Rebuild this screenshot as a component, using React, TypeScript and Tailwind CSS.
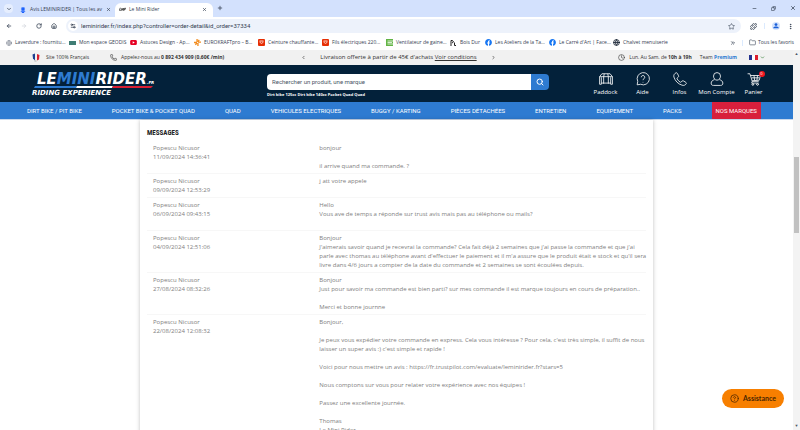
import type { ReactNode } from 'react'
import {
  ArrowLeft, ArrowRight, ChevronDown, ChevronLeft, ChevronRight, ChevronsRight, Clock,
  Copy, EllipsisVertical, Flower2, Folder, Globe, House, Minus, Phone, Plus,
  Puzzle, RotateCw, Search, Settings2, Star, X, CircleQuestionMark,
} from 'lucide-react'
import { FaFacebook } from 'react-icons/fa'

const bookmarks: { label: string; width: string; icon: ReactNode }[] = [
  { label: 'Laverdure : fournitu...', width: 'w-[63px]', icon: <Globe className="size-1.5 text-gray-500" /> },
  { label: 'Mon espace GEODIS', width: 'w-[61px]', icon: <span className="h-1 w-[7px] bg-[#3f7d74]" /> },
  {
    label: 'Astuces Design - Ap...', width: 'w-[64px]',
    icon: (
      <svg viewBox="0 0 16 12" className="h-[5px] w-[7px]">
        <rect width="16" height="12" rx="3" fill="#e60023" />
        <path d="M6 3l5 3-5 3z" fill="#fff" />
      </svg>
    ),
  },
  {
    label: 'EUROKRAFTpro – B...', width: 'w-[64px]',
    icon: (
      <svg viewBox="0 0 16 16" className="size-[7px]" stroke="#f28c1e" strokeWidth="3">
        <path d="M7 0v7M0 8h7M9 9v7M9 7h7M3 13l4-4M9 6l3-4" />
      </svg>
    ),
  },
  { label: 'Ceinture chauffante...', width: 'w-[64px]', icon: <ShopIcon /> },
  { label: 'Fils électriques 220...', width: 'w-[64px]', icon: <ShopIcon /> },
  {
    label: 'Ventilateur de gaine...', width: 'w-[64px]',
    icon: (
      <svg viewBox="0 0 14 14" className="size-[7px]">
        <rect width="14" height="14" fill="#62b445" />
        <path d="M3 4h11M3 7h9M3 10h11" stroke="#fff" strokeWidth="1.5" />
      </svg>
    ),
  },
  {
    label: 'Bois Dur', width: 'w-[35px]',
    icon: (
      <svg viewBox="0 0 14 12" className="h-1.5 w-[7px]" stroke="#222" fill="none" strokeWidth="2">
        <path d="M2 12V1h3l2 3-3 2M9 5v6h3" />
      </svg>
    ),
  },
  { label: 'Les Ateliers de la Ta...', width: 'w-[64px]', icon: <FaFacebook className="size-[7px] text-[#1877f2]" /> },
  { label: "Le Carré d'Art | Face...", width: 'w-[64px]', icon: <FaFacebook className="size-[7px] text-[#1877f2]" /> },
  { label: 'Chalvet menuiserie', width: 'w-[60px]', icon: <Globe className="size-[7px] text-gray-800" strokeWidth={3} /> },
]

const navItems = [
  'DIRT BIKE / PIT BIKE', 'POCKET BIKE & POCKET QUAD', 'QUAD', 'VEHICULES ELECTRIQUES', 'BUGGY / KARTING',
  'PIÈCES DÉTACHÉES', 'ENTRETIEN', 'EQUIPEMENT', 'PACKS',
]

// 24x24 line drawings
const shortcuts = [
  {
    label: 'Paddock',
    paths: ['M5 3h14l4 5v13h-3V9M5 3L1 8v13h3V9', 'M1 8h22', 'M8 8v12M16 8v12', 'M4 19h16', 'M9 3L8 8M15 3l1 5'],
  },
  {
    label: 'Aide',
    paths: ['M2 22l1-6a10.500 10.500 0 1 1 5 5z', 'M9 9a3 3 0 1 1 4.500 2.600c-1 .6-1.500 1.200-1.500 2.400', 'M12 17v1'],
  },
  {
    label: 'Infos',
    paths: ['M5 1.500c1-.6 2 0 2.500 1l2 4c.4 1 .2 1.700-.6 2.400l-1.700 1.400c-.5.500-.4 1 0 1.700 1.500 2.400 3 4 5 5.300.8.500 1.400.4 1.900-.1l1.500-1.700c.7-.7 1.500-.8 2.400-.2l4 2.500c1 .7 1.200 1.500.5 2.500-1.500 2.400-4 3.300-7 2.300C8.500 20.500 3.500 15 1.500 8.500c-.8-3 .8-5.600 3.500-7z'],
  },
  {
    label: 'Mon Compte',
    paths: ['M12 1a6 6 0 0 1 6 6c0 3.500-2.500 7-6 7s-6-3.500-6-7a6 6 0 0 1 6-6z', 'M8 13c-3.500 1-6 3-6 6s1.500 4 4 4h12c2.500 0 4-1 4-4s-2.500-5-6-6'],
  },
  {
    label: 'Panier', count: 0,
    paths: ['M1 3h4l4 13h11', 'M6 6h17l-2 8-12 1M8 10h13M12 6l1 8M18 6l-1 8', 'M9 16l-1 3h12', 'M10 20a1.500 1.500 0 1 0 .1 0zM18 20a1.500 1.500 0 1 0 .1 0z'],
  },
]

const messages = [
  { date: '11/09/2024 14:36:41', text: 'bonjour\n\nil arrive quand ma commande. ?' },
  { date: '09/09/2024 12:53:29', text: 'j att votre appele' },
  { date: '06/09/2024 09:43:15', text: 'Hello\nVous ave de temps a réponde sur trust avis mais pas au téléphone ou mails?\n\u00a0' },
  {
    date: '04/09/2024 12:51:06',
    text: "Bonjour\nJ'aimerais savoir quand je recevrai la commande? Cela fait déjà 2 semaines que j'ai passe la commande et que j'ai\nparle avec thomas au téléphone avant d'effectuer le paiement et il m'a assure que le produit était e stock et qu'il sera\nlivre dans 4/6 jours a compter de la date du commande et 2 semaines se sont écoulées depuis.",
  },
  {
    date: '27/08/2024 08:32:26',
    text: 'Bonjour\nJust pour savoir ma commande est bien parti? sur mes commande il est marque toujours en cours de préparation..\n\nMerci et bonne journne',
  },
  {
    date: '22/08/2024 12:08:32',
    text: "Bonjour,\n\nJe peux vous expédier votre commande en express. Cela vous intéresse ? Pour cela, c'est très simple, il suffit de nous\nlaisser un super avis :) c'est simple et rapide !\n\nVoici pour nous mettre un avis : https://fr.trustpilot.com/evaluate/leminirider.fr?stars=5\n\nNous comptons sur vous pour relater votre expérience avec nos équipes !\n\nPassez une excellente journée.\n\nThomas\nLe Mini Rider",
  },
]

function ShopIcon() {
  return (
    <svg viewBox="0 0 14 14" className="size-[7px]">
      <rect width="14" height="14" rx="2" fill="#e62e04" />
      <path d="M3 4h8M4 5c0 5 6 5 6 0" stroke="#fff" strokeWidth="1.5" fill="none" />
    </svg>
  )
}

function Browser() {
  return (
    <div className="shrink-0 text-gray-700">
      {/* Tabs */}
      <div className="flex h-[17px] items-end bg-[#d3e1fd] pr-1">
        <button aria-label="Rechercher des onglets" className="mb-1 ml-1 mr-1 flex size-[9px] items-center justify-center rounded-sm bg-[#e6eefe]">
          <ChevronDown className="size-1.5" strokeWidth={3} />
        </button>
        <div className="flex h-3.5 w-[98px] items-center gap-1 pb-px pl-[3px] text-[5px]">
          <Flower2 className="size-1.5 shrink-0 text-blue-600" strokeWidth={3} />
          <span className="flex-1 whitespace-nowrap">Avis LEMINIRIDER | Tous les av</span>
          <button aria-label="Fermer Avis" className="mr-1.5"><X className="size-[5px]" strokeWidth={3} /></button>
        </div>
        <div className="flex h-3.5 w-[98px] items-center gap-[3px] rounded-t-md bg-white pb-px pl-1 text-[5px]">
          <svg viewBox="0 0 16 10" className="h-[5px] w-[7px]" stroke="#444" strokeWidth="2" fill="none">
            <path d="M3 1L1 7h3M5 8l2-6 1 4 3-4-2 6M11 8l2-6h2l-1 3h-2" />
          </svg>
          <span className="flex-1">Le Mini Rider</span>
          <button aria-label="Fermer Le Mini Rider" className="mr-1.5"><X className="size-[5px]" strokeWidth={3} /></button>
        </div>
        <button aria-label="Nouvel onglet" className="mb-1.5 ml-1"><Plus className="size-1.5" strokeWidth={3} /></button>
        <div className="mb-1.5 ml-auto flex items-center gap-3.5">
          <button aria-label="Réduire"><Minus className="size-[5px]" strokeWidth={3} /></button>
          <button aria-label="Restaurer"><Copy className="size-[5px] -scale-x-100" strokeWidth={3} /></button>
          <button aria-label="Fermer"><X className="size-1.5" strokeWidth={3} /></button>
        </div>
      </div>

      {/* Toolbar */}
      <div className="flex h-[18px] items-center gap-[9px] bg-white pl-1.5 pr-1.5">
        <button aria-label="Précédent"><ArrowLeft className="size-1.5" strokeWidth={3} /></button>
        <button aria-label="Suivant" className="text-gray-300"><ArrowRight className="size-1.5" strokeWidth={3} /></button>
        <button aria-label="Actualiser"><RotateCw className="size-1.5" strokeWidth={3} /></button>
        <button aria-label="Accueil"><House className="size-1.5" strokeWidth={3} /></button>
        <div className="flex h-3.5 flex-1 items-center gap-[3px] rounded-full bg-[#edf2fb] pl-0.5 pr-1.5">
          <span className="flex size-2.5 items-center justify-center rounded-full bg-white">
            <Settings2 className="size-1.5" strokeWidth={3} />
          </span>
          <input aria-label="Adresse" className="flex-1 bg-transparent font-['Roboto'] text-[6px] leading-[10px] text-gray-700 outline-none"
            defaultValue="leminirider.fr/index.php?controller=order-detail&id_order=37334" />
          <Star className="size-[7px]" strokeWidth={2} />
        </div>
        <div className="flex items-center gap-[7px]">
          <button aria-label="Extensions"><Puzzle className="size-[7px]" strokeWidth={3} /></button>
          <span className="h-1.5 w-px bg-blue-100" />
          <button aria-label="Profil">
            <svg viewBox="0 0 14 14" className="size-2">
              <circle cx="7" cy="7" r="7" fill="#d3e3fd" />
              <circle cx="7" cy="4.5" r="2.5" fill="#1a5fd8" />
              <path d="M2 11c0-4 10-4 10 0z" fill="#1a5fd8" />
            </svg>
          </button>
          <button aria-label="Menu"><EllipsisVertical className="size-[7px]" strokeWidth={3} /></button>
        </div>
      </div>

      {/* Bookmarks */}
      <div className="flex h-[15px] items-center bg-white pl-1.5 pr-1.5 text-[5px]">
        {bookmarks.map(({ label, width, icon }) => (
          <a key={label} href="#" className={`flex shrink-0 items-center gap-[3px] whitespace-nowrap ${width}`}>
            {icon}
            <span>{label}</span>
          </a>
        ))}
        <button aria-label="Autres favoris" className="ml-auto"><ChevronsRight className="size-1.5" strokeWidth={3} /></button>
        <span className="mx-1.5 h-1.5 w-px bg-blue-100" />
        <a href="#" className="flex items-center gap-[2px] whitespace-nowrap"><Folder className="size-[7px]" />Tous les favoris</a>
      </div>
    </div>
  )
}

function TopBar() {
  return (
    <div className="grid h-[15px] grid-cols-[1fr_auto_1fr] items-center whitespace-nowrap bg-[#f1f1f1] pl-8 pr-7 text-[5px] text-[#333]">
      <div className="flex items-center">
        <svg viewBox="0 0 16 18" className="mr-1.5 h-[9px] w-2">
          <path d="M1 3l5-2v14l-4-4z" fill="#1d3f8f" />
          <path d="M10 2l5 2-1 9-4 2z" fill="#d9202e" />
          <path d="M5 16h4" stroke="#777" />
        </svg>
        <span className="w-16">Site 100% Français</span>
        <Phone className="mr-1 size-[7px]" />
        <span>Appelez-nous au <b>0 892 434 909 (0,60€ /min)</b></span>
      </div>
      <div className="flex items-center gap-3.5">
        <button aria-label="Annonce précédente"><ChevronLeft className="size-[5px]" strokeWidth={3} /></button>
        <span className="text-[6px]">Livraison offerte à partir de 45€ d'achats <a href="#" className="underline">Voir conditions</a></span>
        <button aria-label="Annonce suivante"><ChevronRight className="size-[5px]" strokeWidth={3} /></button>
      </div>
      <div className="flex items-center justify-end">
        <Clock className="mr-1 size-[7px]" />
        <span>Lun. Au Sam. de <b>10h à 19h</b></span>
        <a href="#" className="ml-2">Team <b className="text-[#2e7bd1]">Premium</b></a>
        <button aria-label="Langue" className="ml-3 flex items-center gap-0.5">
          <svg viewBox="0 0 9 5" className="h-[5px] w-[9px]">
            <rect width="9" height="5" fill="#fff" />
            <rect width="3" height="5" fill="#24338f" />
            <rect x="6" width="3" height="5" fill="#dc1f2e" />
          </svg>
          <ChevronDown className="size-[5px] text-[#2f7d32]" strokeWidth={3} />
        </button>
      </div>
    </div>
  )
}

function Logo() {
  return (
    <svg viewBox="0 0 126 26" className="h-[26px] w-[126px]" fontFamily="DejaVu Sans" fontWeight="bold" fontStyle="italic">
      <text x="6" y="13" fontSize="15" fill="#fff">LE<tspan fill="#2e7bd1">MINI</tspan>RIDER<tspan fontSize="4">.FR</tspan></text>
      <path d="M4 15h42l-1 2H3z" fill="#2e7bd1" />
      <path d="M46 15h36l-1 2H45z" fill="#fff" />
      <path d="M82 15h40l-2 2H81z" fill="#d81f32" />
      <text x="1" y="24" fontSize="7" fill="#fff">RIDING EXPERIENCE</text>
    </svg>
  )
}

function Header() {
  return (
    <header>
      <div className="flex h-[37px] items-center bg-[#03213a] pl-[31px] pr-[21px] text-white">
        <a href="#" aria-label="Le Mini Rider"><Logo /></a>
        <div className="ml-[110px] mt-1 w-[282px]">
          <form className="flex h-4">
            <input aria-label="Recherche" placeholder="Rechercher un produit, une marque"
              className="min-w-0 flex-1 rounded-l bg-white px-[5px] font-['Roboto'] text-[6px] text-gray-700 outline-none placeholder:text-gray-600" />
            <button type="button" aria-label="Rechercher" className="flex w-[18px] items-center justify-center rounded-r bg-[#2e7bd1]">
              <Search className="size-2" strokeWidth={3} />
            </button>
          </form>
          <p className="mt-0.5 text-[4px] font-bold leading-[6px]">Dirt bike 125cc Dirt bike 140cc Pocket Quad Quad</p>
        </div>
        <div className="ml-auto flex text-[6px] leading-[8px]">
          {shortcuts.map(({ label, paths, count }) => (
            <a key={label} href="#" className="flex w-[37px] flex-col items-center gap-0.5">
              <span className="relative">
                <svg viewBox="0 0 24 24" className="size-3.5" fill="none" stroke="#fff" strokeWidth="1.4" strokeLinejoin="round">
                  {paths.map((d) => <path key={d} d={d} />)}
                </svg>
                {count !== undefined && (
                  <span className="absolute -right-1 -top-px size-1.5 rounded-full bg-[#f0161f] text-center text-[4px] leading-[6px]">{count}</span>
                )}
              </span>
              <span className="whitespace-nowrap">{label}</span>
            </a>
          ))}
        </div>
      </div>
      <nav className="flex h-[17px] items-center gap-[30px] whitespace-nowrap bg-[#2e7bd1] pl-[27px] font-['Roboto'] text-[6px] text-white">
        {navItems.map((item) => <a key={item} href="#">{item}</a>)}
        <a href="#" className="flex h-full items-center bg-[#d81f3c] px-1">NOS MARQUES</a>
      </nav>
    </header>
  )
}

function Messages() {
  return (
    <section className="mx-auto w-[513px] max-w-full px-[7px] pt-2 shadow-[0_0_4px_rgba(0,0,0,0.25)]">
      <h2 className="mb-[3px] font-['Liberation_Sans_Narrow','Roboto_Condensed','Roboto'] text-[7px] font-bold leading-[10px] text-[#222]">MESSAGES</h2>
      <table className="w-full table-fixed text-left text-[6px] leading-[9px] text-[#808080]">
        <tbody>
          {messages.map(({ date, text }) => (
            <tr key={date} className="border-b border-[#f7f7f7]">
              <td className="w-1/3 px-1.5 pb-0.5 pt-[3px] align-top">Popescu Nicusor<br />{date}</td>
              <td className="whitespace-pre pb-0.5 pl-1.5 pt-[3px] align-top">{text}</td>
            </tr>
          ))}
        </tbody>
      </table>
    </section>
  )
}

export default function App() {
  return (
    <div className="relative flex h-screen flex-col overflow-hidden bg-white font-['Open_Sans',sans-serif]">
      <Browser />
      <div className="flex min-h-0 flex-1">
        <div className="min-w-0 flex-1 overflow-hidden">
          <TopBar />
          <Header />
          <main className="border-t border-[#c9d8ec]"><Messages /></main>
        </div>
        {/* Scrollbar */}
        <div className="flex w-[7px] flex-col items-center justify-between bg-[#f3f3f3] py-0.5">
          <span className="text-[4px] leading-[4px] text-gray-600">▲</span>
          <div className="mb-[191px] mt-auto h-[76px] w-[5px] bg-[#c1c1c1]" />
          <span className="text-[4px] leading-[4px] text-gray-600">▼</span>
        </div>
      </div>
      <button className="absolute bottom-[22px] right-4 flex h-[19px] items-center gap-1 rounded-full bg-[#f77f00] px-2 font-['Lato'] text-[7px] font-bold text-[#4a2600]">
        <CircleQuestionMark className="size-[9px]" />
        Assistance
      </button>
    </div>
  )
}
